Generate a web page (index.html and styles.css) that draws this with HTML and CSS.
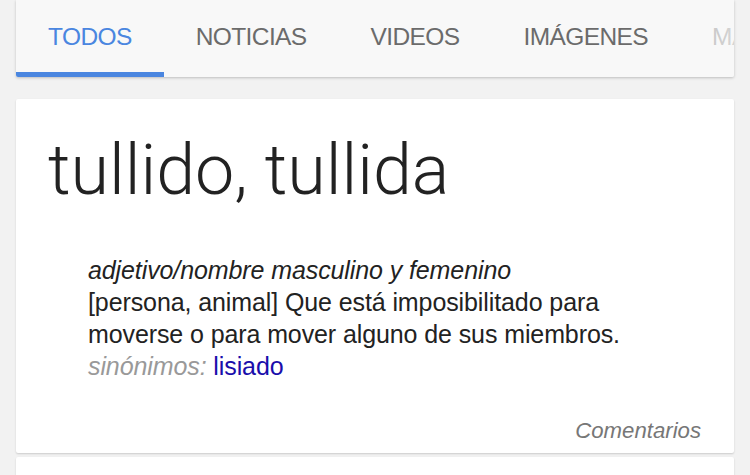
FILE: index.html
```html
<!DOCTYPE html>
<html lang="es">
<head>
<meta charset="utf-8">
<link rel="stylesheet" href="styles.css">
</head>
<body>
<div class="page">
  <nav class="tabs">
    <div class="tab-row">
      <div class="tab active">TODOS</div>
      <div class="tab">NOTICIAS</div>
      <div class="tab">VIDEOS</div>
      <div class="tab">IMÁGENES</div>
      <div class="tab">MAPS</div>
    </div>
    <div class="fade"></div>
  </nav>
  <section class="card">
    <h1 class="word">tullido, tullida</h1>
    <div class="def">
      <div class="pos">adjetivo/nombre masculino y femenino</div>
      <div class="meaning">[persona, animal] Que está imposibilitado para moverse o para mover alguno de sus miembros.</div>
      <div class="syn"><span class="syn-label">sinónimos:</span> <a class="syn-link">lisiado</a></div>
    </div>
    <div class="feedback">Comentarios</div>
  </section>
  <section class="card next"></section>
</div>
</body>
</html>
```
FILE: styles.css
```css
html, body {
  margin: 0;
  padding: 0;
  background: #f2f2f2;
  font-family: "Liberation Sans", Arial, sans-serif;
}
.page {
  width: 718px;
  margin: 0 16px;
  display: flex;
  flex-direction: column;
  gap: 22px;
}
.tabs {
  position: relative;
  height: 77px;
  background: #f8f8f8;
  box-shadow: 0 1px 3px rgba(0,0,0,0.22);
  border-radius: 0 0 2px 2px;
  overflow: hidden;
}
.tab-row {
  display: flex;
  height: 100%;
  white-space: nowrap;
}
.tab {
  flex: none;
  padding: 0 32px;
  height: 100%;
  box-sizing: border-box;
  display: flex;
  align-items: center;
  padding-bottom: 3px;
  font-size: 24.5px;
  letter-spacing: -0.6px;
  color: #6b6b6b;
}
.tab.active {
  color: #4a86e0;
  border-bottom: 5px solid #4a86e0;
  padding-bottom: 0;
  padding-top: 2px;
}
.fade {
  position: absolute;
  top: 0;
  right: 0;
  width: 40px;
  height: 100%;
  background: linear-gradient(to right, rgba(248,248,248,0.6), rgba(248,248,248,0.75));
}
.card {
  background: #fff;
  border-radius: 2px;
  box-shadow: 0 1px 2px rgba(0,0,0,0.16);
  padding: 31px 32px 9px 32px;
  height: 354px;
  box-sizing: border-box;
  display: flex;
  flex-direction: column;
}
.card.next {
  height: 20px;
  margin-top: -18px;
  padding: 0;
}
.word {
  margin: 0;
  font-family: Roboto, "Liberation Sans", sans-serif;
  font-weight: 300;
  font-size: 70px;
  line-height: 80px;
  color: #222;
  letter-spacing: 0;
}
.def {
  margin-top: 44px;
  padding-left: 40px;
  font-size: 25px;
  line-height: 32px;
  color: #222;
  letter-spacing: -0.1px;
}
.pos {
  font-style: italic;
}
.meaning {
  width: 560px;
}
.syn-label {
  font-style: italic;
  color: #999;
}
.syn-link {
  color: #1a0dab;
}
.feedback {
  margin-top: auto;
  text-align: right;
  font-style: italic;
  font-size: 22.2px;
  color: #777;
  padding-right: 1px;
}
```
